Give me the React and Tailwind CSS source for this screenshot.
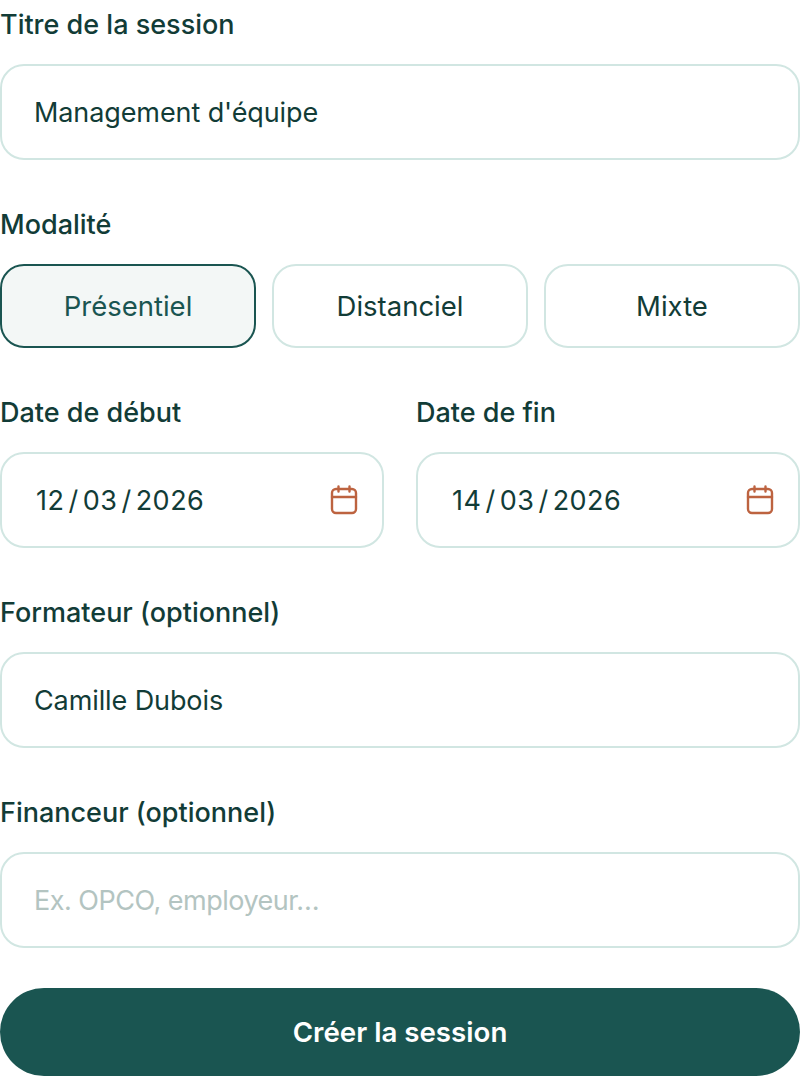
import { useState } from 'react';

const FONT = "font-['Inter',sans-serif]";

function Label({ children }) {
    return <label className="block h-12 mb-4 text-[27px] leading-[50px] font-medium text-[#123c37]">{children}</label>;
}

function TextField({ value, placeholder }) {
    return (
        <input
            readOnly
            value={value}
            placeholder={placeholder}
            className="block w-full h-24 px-[32px] bg-white border-2 border-[#d1e6e2] rounded-3xl text-[27px] text-[#123c37] tracking-[-0.1px] outline-none placeholder:text-[#b3c4c1] placeholder:tracking-[-0.5px]"
        />
    );
}

function CalendarIcon() {
    return (
        <svg width="32" height="32" viewBox="0 0 32 32" fill="none" stroke="#bd6340" strokeWidth="2.4" strokeLinecap="round" strokeLinejoin="round">
            <rect x="4" y="5" width="24" height="24" rx="4" />
            <path d="M4 13h24M10.500 2.500v5M21.500 2.500v5" />
        </svg>
    );
}

function DateField({ label, day, month, year }) {
    return (
        <div>
            <Label>{label}</Label>
            <div className="flex items-center justify-between h-24 pl-[34px] pr-[22px] bg-white border-2 border-[#d1e6e2] rounded-3xl">
                <span className="pt-[2px] text-[27px] text-[#123c37] tracking-[0.5px]">
                    {day}<span className="mx-[4px]">/</span>{month}<span className="mx-[4px]">/</span>{year}
                </span>
                <CalendarIcon />
            </div>
        </div>
    );
}

const MODES = ['Présentiel', 'Distanciel', 'Mixte'];

export default function App() {
    const [mode, setMode] = useState('Présentiel');

    return (
        <div className={`${FONT} w-[800px] h-[1076px] bg-white flex flex-col overflow-hidden`}>
            <div className="mb-10">
                <Label>Titre de la session</Label>
                <TextField value="Management d'équipe" />
            </div>

            <div className="mb-10">
                <Label>Modalité</Label>
                <div className="grid grid-cols-3 gap-4">
                    {MODES.map((m) => (
                        <button
                            key={m}
                            onClick={() => setMode(m)}
                            className={
                                m === mode
                                    ? 'h-[84px] pt-[2px] rounded-3xl border-2 border-[#1a5551] bg-[#f3f7f6] text-[27.500px] text-[#1a5551]'
                                    : 'h-[84px] pt-[2px] rounded-3xl border-2 border-[#d1e6e2] bg-white text-[27.500px] text-[#123c37]'
                            }
                        >
                            {m}
                        </button>
                    ))}
                </div>
            </div>

            <div className="grid grid-cols-2 gap-8 mb-10">
                <DateField label="Date de début" day="12" month="03" year="2026" />
                <DateField label="Date de fin" day="14" month="03" year="2026" />
            </div>

            <div className="mb-10">
                <Label>Formateur (optionnel)</Label>
                <TextField value="Camille Dubois" />
            </div>

            <div className="mb-10">
                <Label>Financeur (optionnel)</Label>
                <TextField value="" placeholder="Ex. OPCO, employeur…" />
            </div>

            <button className="h-[88px] pt-[2px] shrink-0 rounded-full bg-[#1a5551] text-white text-[27.700px] font-semibold">
                Créer la session
            </button>
        </div>
    );
}
